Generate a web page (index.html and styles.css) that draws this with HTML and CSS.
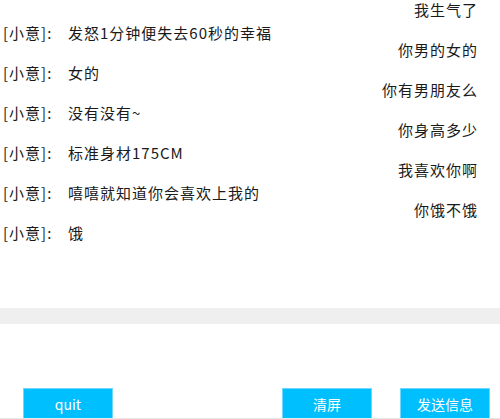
FILE: index.html
```html
<!DOCTYPE html>
<html lang="zh-CN">
<head>
<meta charset="utf-8">
<title>聊天</title>
<link rel="stylesheet" href="styles.css">
</head>
<body>
<div class="chat">
  <div class="col col-left">
    <div class="msg"><span class="name">[小意]:</span>发怒1分钟便失去60秒的幸福</div>
    <div class="msg"><span class="name">[小意]:</span>女的</div>
    <div class="msg"><span class="name">[小意]:</span>没有没有~</div>
    <div class="msg"><span class="name">[小意]:</span>标准身材175CM</div>
    <div class="msg"><span class="name">[小意]:</span>嘻嘻就知道你会喜欢上我的</div>
    <div class="msg"><span class="name">[小意]:</span>饿</div>
  </div>
  <div class="col col-right">
    <div class="msg">我生气了</div>
    <div class="msg">你男的女的</div>
    <div class="msg">你有男朋友么</div>
    <div class="msg">你身高多少</div>
    <div class="msg">我喜欢你啊</div>
    <div class="msg">你饿不饿</div>
  </div>
</div>
<div class="divider"></div>
<div class="input-area"></div>
<div class="actions">
  <button class="btn btn-quit">quit</button>
  <div class="actions-right">
    <button class="btn">清屏</button>
    <button class="btn">发送信息</button>
  </div>
</div>
<div class="bottom-line"></div>
</body>
</html>
```
FILE: styles.css
```css
html, body {
  margin: 0;
  padding: 0;
  background: #ffffff;
  overflow: hidden;
}
body {
  width: 500px;
  height: 419px;
  font-family: "Noto Sans CJK SC", "Noto Sans", sans-serif;
}
.chat {
  height: 308px;
  display: grid;
  grid-template-columns: 1fr 1fr;
  box-sizing: border-box;
}
.col {
  display: flex;
  flex-direction: column;
  gap: 20px;
}
.col-left {
  padding: 23px 0 0 3px;
  align-items: flex-start;
}
.col-right {
  padding: 0 22px 0 0;
  align-items: flex-end;
}
.msg {
  font-size: 15px;
  line-height: 20px;
  height: 20px;
  color: #1a1a1a;
  letter-spacing: 1px;
  white-space: nowrap;
}
.name {
  display: inline-block;
  width: 65px;
}
.divider {
  height: 16px;
  background: #efefef;
}
.input-area {
  height: 64px;
}
.actions {
  display: flex;
  padding: 0 10px 0 23px;
  height: 30px;
}
.actions-right {
  margin-left: auto;
  display: flex;
  gap: 28px;
}
.btn {
  width: 90px;
  height: 30px;
  margin: 0;
  padding: 0;
  box-sizing: border-box;
  border: 1px solid #6fd8ff;
  border-bottom: none;
  background: #00bfff;
  color: #ffffff;
  font-family: "Noto Sans CJK SC", "Noto Sans", sans-serif;
  font-size: 14px;
  line-height: 26px;
}
.bottom-line {
  height: 1px;
  background: #e6e6e6;
}
```
